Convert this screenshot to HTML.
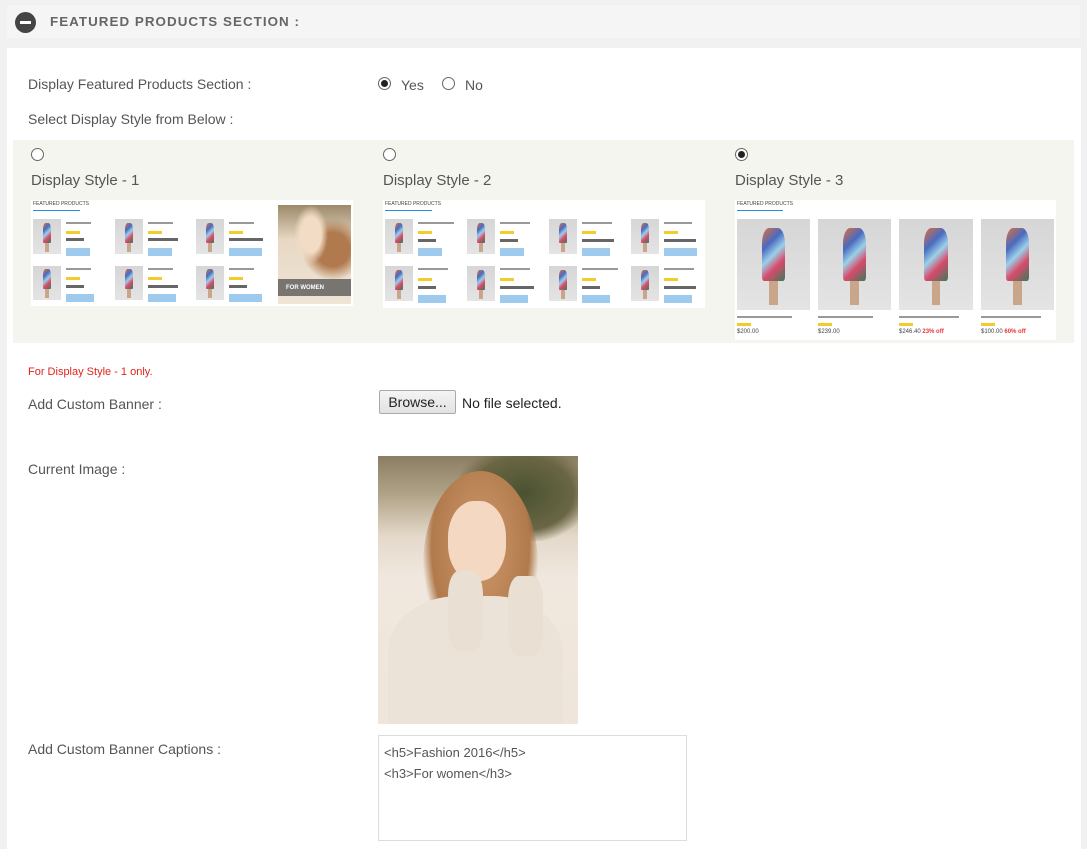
<!DOCTYPE html>
<html><head><meta charset="utf-8"><style>
*{margin:0;padding:0;box-sizing:border-box}
body{width:1087px;height:849px;background:#f1f1f1;font-family:"Liberation Sans",sans-serif;color:#555;position:relative;overflow:hidden}
.a{position:absolute}
.t{font-size:14px;color:#555;white-space:nowrap}
.rad{position:absolute;width:13px;height:13px;border:1px solid #666;border-radius:50%;background:#fff}
.rad.on::after{content:"";position:absolute;left:2px;top:2px;width:7px;height:7px;border-radius:50%;background:#222}
.thumb{position:absolute;background:#fff}
.ph{position:absolute;background:linear-gradient(#d6d6d6,#e4e4e4)}
.ph::after{content:"";position:absolute;left:34%;top:10%;width:32%;height:58%;border-radius:30% 30% 8% 8%;background:linear-gradient(135deg,#e0703a,#4a6ac0 30%,#9bd0e8 50%,#d84a6a 70%,#3a7a5a)}
.ph::before{content:"";position:absolute;left:44%;top:66%;width:12%;height:28%;background:#c9a58a}
.btn{position:absolute;height:8px;width:30px;background:#9ecbed}
.st{position:absolute;height:3px;width:14px;background:#f3cc2a}
.tx{position:absolute;height:2px;background:#999}
.pr{position:absolute;height:3px;background:#666}
</style></head><body>
<div class="a" style="left:7px;top:5px;width:1073px;height:33px;background:#f5f5f5"></div>
<div class="a" style="left:15px;top:12px;width:21px;height:21px;border-radius:50%;background:#444"></div>
<div class="a" style="left:20px;top:21px;width:11px;height:3px;background:#fff"></div>
<div class="a" style="left:50px;top:14px;font-size:13px;font-weight:bold;letter-spacing:1px;color:#666;transform:scaleX(1.03);transform-origin:left">FEATURED PRODUCTS SECTION :</div>
<div class="a" style="left:7px;top:48px;width:1074px;height:801px;background:#fff"></div>

<div class="a t" style="left:28px;top:76px">Display Featured Products Section :</div>
<div class="rad on" style="left:378px;top:77px"></div><div class="a t" style="left:401px;top:77px">Yes</div>
<div class="rad" style="left:442px;top:77px"></div><div class="a t" style="left:465px;top:77px">No</div>
<div class="a t" style="left:28px;top:111px">Select Display Style from Below :</div>

<div class="a" style="left:13px;top:140px;width:1061px;height:203px;background:#f5f5ef"></div>
<div class="rad" style="left:31px;top:148px"></div>
<div class="rad" style="left:383px;top:148px"></div>
<div class="rad on" style="left:735px;top:148px"></div>
<div class="a" style="left:31px;top:172px;font-size:15px;color:#555">Display Style - 1</div>
<div class="a" style="left:383px;top:172px;font-size:15px;color:#555">Display Style - 2</div>
<div class="a" style="left:735px;top:172px;font-size:15px;color:#555">Display Style - 3</div>

<!-- style 1 -->
<div class="thumb" style="left:31px;top:200px;width:322px;height:106px">
 <div class="a" style="left:2px;top:1px;font-size:5px;color:#444">FEATURED PRODUCTS</div>
 <div class="a" style="left:2px;top:10px;width:47px;height:1px;background:#2a8fe0"></div>
 <div class="ph" style="left:2px;top:19px;width:28px;height:35px"></div>
 <div class="ph" style="left:84px;top:19px;width:28px;height:35px"></div>
 <div class="ph" style="left:165px;top:19px;width:28px;height:35px"></div>
 <div class="ph" style="left:2px;top:66px;width:28px;height:34px"></div>
 <div class="ph" style="left:84px;top:66px;width:28px;height:34px"></div>
 <div class="ph" style="left:165px;top:66px;width:28px;height:34px"></div>
 <div class="tx" style="left:35px;top:22px;width:25px"></div><div class="tx" style="left:117px;top:22px;width:25px"></div><div class="tx" style="left:198px;top:22px;width:25px"></div>
 <div class="st" style="left:35px;top:31px"></div><div class="st" style="left:117px;top:31px"></div><div class="st" style="left:198px;top:31px"></div>
 <div class="pr" style="left:35px;top:38px;width:18px"></div><div class="pr" style="left:117px;top:38px;width:30px"></div><div class="pr" style="left:198px;top:38px;width:34px"></div>
 <div class="tx" style="left:35px;top:68px;width:25px"></div><div class="tx" style="left:117px;top:68px;width:25px"></div><div class="tx" style="left:198px;top:68px;width:25px"></div>
 <div class="st" style="left:35px;top:77px"></div><div class="st" style="left:117px;top:77px"></div><div class="st" style="left:198px;top:77px"></div>
 <div class="pr" style="left:35px;top:85px;width:18px"></div><div class="pr" style="left:117px;top:85px;width:30px"></div><div class="pr" style="left:198px;top:85px;width:18px"></div>
 <div class="btn" style="left:35px;top:48px;width:24px"></div><div class="btn" style="left:117px;top:48px;width:24px"></div><div class="btn" style="left:198px;top:48px;width:33px"></div>
 <div class="btn" style="left:35px;top:94px;width:28px"></div><div class="btn" style="left:117px;top:94px;width:28px"></div><div class="btn" style="left:198px;top:94px;width:33px"></div>
 <div class="a" style="left:247px;top:5px;width:73px;height:99px;background:radial-gradient(ellipse at 45% 30%,#f3dcc6 0 18%,transparent 30%),radial-gradient(ellipse at 75% 45%,#b07a4e 0 22%,transparent 40%),linear-gradient(#9c8a6a,#e8d8c4 35%,#efe4d6)"></div>
 <div class="a" style="left:247px;top:79px;width:73px;height:17px;background:rgba(80,80,80,.75);color:#fff;font-size:6px;padding:6px 8px 0;font-weight:bold">FOR WOMEN</div>
</div>
<!-- style 2 -->
<div class="thumb" style="left:383px;top:200px;width:322px;height:108px">
 <div class="a" style="left:2px;top:1px;font-size:5px;color:#444">FEATURED PRODUCTS</div>
 <div class="a" style="left:2px;top:10px;width:47px;height:1px;background:#2a8fe0"></div>
 <div class="ph" style="left:2px;top:19px;width:28px;height:35px"></div><div class="ph" style="left:84px;top:19px;width:28px;height:35px"></div><div class="ph" style="left:166px;top:19px;width:28px;height:35px"></div><div class="ph" style="left:248px;top:19px;width:28px;height:35px"></div>
 <div class="ph" style="left:2px;top:66px;width:28px;height:35px"></div><div class="ph" style="left:84px;top:66px;width:28px;height:35px"></div><div class="ph" style="left:166px;top:66px;width:28px;height:35px"></div><div class="ph" style="left:248px;top:66px;width:28px;height:35px"></div>
 <div class="tx" style="left:35px;top:22px;width:36px"></div><div class="tx" style="left:117px;top:22px;width:30px"></div><div class="tx" style="left:199px;top:22px;width:30px"></div><div class="tx" style="left:281px;top:22px;width:28px"></div>
 <div class="st" style="left:35px;top:31px"></div><div class="st" style="left:117px;top:31px"></div><div class="st" style="left:199px;top:31px"></div><div class="st" style="left:281px;top:31px"></div>
 <div class="pr" style="left:35px;top:39px;width:18px"></div><div class="pr" style="left:117px;top:39px;width:18px"></div><div class="pr" style="left:199px;top:39px;width:32px"></div><div class="pr" style="left:281px;top:39px;width:32px"></div>
 <div class="tx" style="left:35px;top:68px;width:30px"></div><div class="tx" style="left:117px;top:68px;width:30px"></div><div class="tx" style="left:199px;top:68px;width:36px"></div><div class="tx" style="left:281px;top:68px;width:30px"></div>
 <div class="st" style="left:35px;top:78px"></div><div class="st" style="left:117px;top:78px"></div><div class="st" style="left:199px;top:78px"></div><div class="st" style="left:281px;top:78px"></div>
 <div class="pr" style="left:35px;top:86px;width:18px"></div><div class="pr" style="left:117px;top:86px;width:34px"></div><div class="pr" style="left:199px;top:86px;width:18px"></div><div class="pr" style="left:281px;top:86px;width:32px"></div>
 <div class="btn" style="left:35px;top:48px;width:24px"></div><div class="btn" style="left:117px;top:48px;width:24px"></div><div class="btn" style="left:199px;top:48px;width:28px"></div><div class="btn" style="left:281px;top:48px;width:33px"></div>
 <div class="btn" style="left:35px;top:95px;width:28px"></div><div class="btn" style="left:117px;top:95px;width:28px"></div><div class="btn" style="left:199px;top:95px;width:28px"></div><div class="btn" style="left:281px;top:95px;width:28px"></div>
</div>
<!-- style 3 -->
<div class="thumb" style="left:735px;top:200px;width:321px;height:140px">
 <div class="a" style="left:2px;top:1px;font-size:5px;color:#444">FEATURED PRODUCTS</div>
 <div class="a" style="left:2px;top:10px;width:46px;height:1px;background:#2a8fe0"></div>
 <div class="ph" style="left:2px;top:19px;width:73px;height:91px"></div>
 <div class="ph" style="left:83px;top:19px;width:73px;height:91px"></div>
 <div class="ph" style="left:164px;top:19px;width:74px;height:91px"></div>
 <div class="ph" style="left:246px;top:19px;width:73px;height:91px"></div>
 <div class="tx" style="left:2px;top:116px;width:55px"></div><div class="tx" style="left:83px;top:116px;width:55px"></div><div class="tx" style="left:164px;top:116px;width:60px"></div><div class="tx" style="left:246px;top:116px;width:60px"></div>
 <div class="st" style="left:2px;top:123px"></div><div class="st" style="left:83px;top:123px"></div><div class="st" style="left:164px;top:123px"></div><div class="st" style="left:246px;top:123px"></div>
 <div class="a" style="left:2px;top:129px;font-size:6px;color:#444">$200.00</div>
 <div class="a" style="left:83px;top:129px;font-size:6px;color:#444">$239.00</div>
 <div class="a" style="left:164px;top:129px;font-size:6px;color:#444">$246.40 <b style="color:#e33">23% off</b></div>
 <div class="a" style="left:246px;top:129px;font-size:6px;color:#444">$100.00 <b style="color:#e33">60% off</b></div>
</div>

<div class="a" style="left:28px;top:366px;font-size:11px;color:#e2231a">For Display Style - 1 only.</div>
<div class="a t" style="left:28px;top:396px">Add Custom Banner :</div>
<div class="a" style="left:379px;top:390px;width:77px;height:24px;border:1px solid #aaa;border-radius:2px;background:linear-gradient(#f4f4f4,#e2e2e2);font-size:14px;color:#222;text-align:center;line-height:22px">Browse...</div>
<div class="a" style="left:462px;top:395px;font-size:14px;color:#222">No file selected.</div>
<div class="a t" style="left:28px;top:461px">Current Image :</div>
<div class="a" style="left:378px;top:456px;width:200px;height:268px;overflow:hidden;background:linear-gradient(#8a7e62 0,#b0a286 14%,#e4d9ca 30%,#f0e8de 45%,#efe5da 100%)">
 <div class="a" style="left:80px;top:-10px;width:130px;height:95px;background:radial-gradient(ellipse,#4a5230,#6a6644 55%,transparent 75%)"></div>
 <div class="a" style="left:45px;top:15px;width:115px;height:190px;border-radius:50% 50% 40% 40%;background:radial-gradient(ellipse at 50% 40%,#d09a6c,#b07a4c 60%,transparent 72%)"></div>
 <div class="a" style="left:70px;top:45px;width:58px;height:80px;border-radius:45%;background:#f4d8c2"></div>
 <div class="a" style="left:10px;top:140px;width:175px;height:140px;border-radius:40% 40% 0 0;background:#ece3d8"></div>
 <div class="a" style="left:70px;top:115px;width:35px;height:80px;border-radius:30%;background:#e9dfd2"></div>
 <div class="a" style="left:130px;top:120px;width:35px;height:80px;border-radius:30%;background:#e9dfd2"></div>
</div>
<div class="a t" style="left:28px;top:741px">Add Custom Banner Captions :</div>
<div class="a" style="left:378px;top:735px;width:309px;height:106px;border:1px solid #ddd;background:#fff;font-size:13px;color:#555;padding:6px 5px;line-height:21px">&lt;h5&gt;Fashion 2016&lt;/h5&gt;<br>&lt;h3&gt;For women&lt;/h3&gt;</div>
</body></html>
